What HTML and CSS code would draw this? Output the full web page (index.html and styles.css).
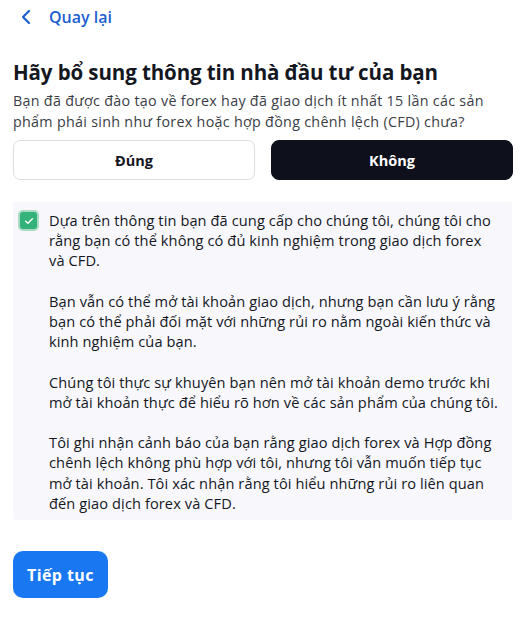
FILE: index.html
```html
<!DOCTYPE html>
<html lang="vi">
<head>
  <meta charset="UTF-8" />
  <meta name="viewport" content="width=device-width, initial-scale=1.0" />
  <title>Thông tin nhà đầu tư</title>
  <link rel="stylesheet" href="styles.css">
</head>
<body>
  <div class="page">
    <a class="back" href="#">
      <svg class="back-icon" viewBox="0 0 12 16" width="12" height="16"><path d="M9 2 L3 8 L9 14" fill="none" stroke="currentColor" stroke-width="2.2" stroke-linecap="round" stroke-linejoin="round"/></svg>
      <span>Quay lại</span>
    </a>

    <h1 class="title">Hãy bổ sung thông tin nhà đầu tư của bạn</h1>
    <p class="question">Bạn đã được đào tạo về forex hay đã giao dịch ít nhất 15 lần các sản phẩm phái sinh như forex hoặc hợp đồng chênh lệch (CFD) chưa?</p>

    <div class="choices">
      <button class="choice">Đúng</button>
      <button class="choice active">Không</button>
    </div>

    <div class="warning">
      <span class="check">
        <svg viewBox="0 0 16 16" width="12" height="12"><path d="M3.5 8.2 L6.6 11 L12.5 5" fill="none" stroke="#fff" stroke-width="1.8" stroke-linecap="round" stroke-linejoin="round"/></svg>
      </span>
      <div class="warning-text">
        <p>Dựa trên thông tin bạn đã cung cấp cho chúng tôi, chúng tôi cho rằng bạn có thể không có đủ kinh nghiệm trong giao dịch forex và CFD.</p>
        <p>Bạn vẫn có thể mở tài khoản giao dịch, nhưng bạn cần lưu ý rằng bạn có thể phải đối mặt với những rủi ro nằm ngoài kiến thức và kinh nghiệm của bạn.</p>
        <p>Chúng tôi thực sự khuyên bạn nên mở tài khoản demo trước khi mở tài khoản thực để hiểu rõ hơn về các sản phẩm của chúng tôi.</p>
        <p>Tôi ghi nhận cảnh báo của bạn rằng giao dịch forex và Hợp đồng chênh lệch không phù hợp với tôi, nhưng tôi vẫn muốn tiếp tục mở tài khoản. Tôi xác nhận rằng tôi hiểu những rủi ro liên quan đến giao dịch forex và CFD.</p>
      </div>
    </div>

    <button class="next">Tiếp tục</button>
  </div>
</body>
</html>
```

FILE: styles.css
```css
:root {
  --blue: #1d5fd0;
  --btn-blue: #1a77f2;
  --dark: #0e111c;
  --text: #15171f;
  --muted: #3a3d46;
  --panel: #f7f7fc;
  --border: #dcdde2;
  --green: #35b27a;
}

html, body { margin: 0; background: #fff; }
body {
  font-family: "Open Sans", "Noto Sans", sans-serif;
  color: var(--text);
}

.page { padding: 6px 19px 20px 13px; }

.back { display: flex; align-items: center; gap: 17px; padding-left: 7px; height: 22px; color: var(--blue); text-decoration: none; font-weight: 600; font-size: 16px; }
.back-icon { display: block; }

.title { margin: 30px 0 0; font-size: 20.5px; font-weight: 700; line-height: 28px; letter-spacing: -0.1px; }
.question { margin: 4px 0 0; font-size: 14.3px; line-height: 21px; letter-spacing: 0.3px; color: var(--muted); }

.choices { display: grid; grid-template-columns: 1fr 1fr; gap: 16px; margin-top: 8px; }
.choice { height: 40px; font-family: inherit; font-size: 14.5px; font-weight: 700; color: var(--text); background: #fff; border: 1px solid var(--border); border-radius: 7px; cursor: pointer; }
.choice.active { background: var(--dark); border-color: var(--dark); color: #fff; border-radius: 8px; }

.warning { display: flex; gap: 10px; margin: 22px 1px 0 0; padding: 8px 12.5px 7px 5px; background: var(--panel); border-radius: 3px; }
.check { flex: none; width: 17px; height: 17px; display: flex; align-items: center; justify-content: center; background: var(--green); border: 2px solid #a9dcc3; border-radius: 5px; }
.warning-text { flex: 1; font-size: 14.6px; line-height: 20.2px; letter-spacing: 0.1px; color: var(--text); }
.warning-text p { margin: 0 0 20.2px; }
.warning-text p:last-child { margin-bottom: 0; }

.next { margin-top: 31px; height: 47px; padding: 0 14px; font-family: inherit; font-size: 16px; font-weight: 700; letter-spacing: 0.4px; color: #fff; background: var(--btn-blue); border: 0; border-radius: 10px; cursor: pointer; }
```
